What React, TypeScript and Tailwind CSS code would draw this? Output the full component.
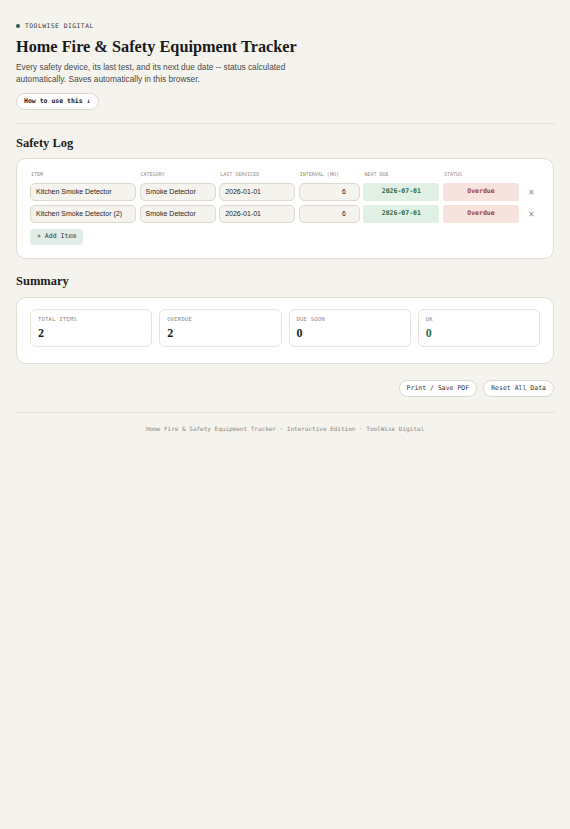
import React from "react";

const mono = "font-['DejaVu_Sans_Mono','Liberation_Mono',monospace]";
const serif = "font-['Liberation_Serif','DejaVu_Serif',serif]";
const sans = "font-['Liberation_Sans',Arial,sans-serif]";

const rows = [
  { item: "Kitchen Smoke Detector", cat: "Smoke Detector", last: "2026-01-01", interval: "6", next: "2026-07-01", status: "Overdue" },
  { item: "Kitchen Smoke Detector (2)", cat: "Smoke Detector", last: "2026-01-01", interval: "6", next: "2026-07-01", status: "Overdue" },
];

const inputCls = `h-[18px] w-full rounded-[5px] border border-[#ddd8cc] bg-[#f5f3ee] px-[5px] text-[7px] text-[#1f1f1f] ${sans} flex items-center`;

function Stat({ label, value, green }: { label: string; value: string; green?: boolean }) {
  return (
    <div className="h-[38px] rounded-[6px] border border-[#e6e2d8] bg-white px-[7px] pt-[7px]">
      <div className={`${mono} text-[5.5px] tracking-[0.04em] text-[#8a877f] leading-none`}>{label}</div>
      <div className={`${serif} mt-[4px] text-[12px] font-bold leading-none ${green ? "text-[#2f6b45]" : "text-[#1c1c1c]"}`}>{value}</div>
    </div>
  );
}

export default function App() {
  return (
    <div className="min-h-[829px] bg-[#f5f3ee] px-4 pt-[23px] text-[#1c1c1c]">
      <div className="flex items-center gap-[5px]">
        <span className="h-[4px] w-[4px] rounded-full bg-[#2f5a3f]" />
        <span className={`${mono} text-[6.3px] tracking-[0.08em] text-[#333] leading-none`}>TOOLWISE DIGITAL</span>
      </div>
      <h1 className={`${serif} mt-[7px] text-[16.3px] font-bold leading-[22px] text-[#1a1a1a]`}>
        Home Fire &amp; Safety Equipment Tracker
      </h1>
      <p className={`${sans} mt-[3px] w-[272px] text-[8.3px] leading-[12px] text-[#4a4a4a]`}>
        Every safety device, its last test, and its next due date -- status calculated automatically. Saves automatically in this browser.
      </p>
      <button className={`${mono} mt-[8px] flex h-[17px] items-center rounded-full border border-[#dcd7cb] bg-white px-[7px] text-[6.5px] font-bold text-[#222]`}>
        How to use this ↓
      </button>
      <div className="mt-[13px] h-px bg-[#e3dfd5]" />

      <h2 className={`${serif} mt-[11px] text-[12.5px] font-bold leading-[16px]`}>Safety Log</h2>
      <div className="mt-[7px] rounded-[10px] border border-[#e2ddd1] bg-white px-[13px] pt-[11px] pb-[13px]">
        <div className="grid grid-cols-[106px_76px_76px_61px_76px_76px_1fr] gap-x-[3.6px] gap-y-[4px]">
          {["ITEM", "CATEGORY", "LAST SERVICED", "INTERVAL (MO)", "NEXT DUE", "STATUS", ""].map((h, i) => (
            <div key={i} className={`${mono} text-[5px] leading-[8px] mb-[1px] text-[#8d8a82] pl-[1px]`}>{h}</div>
          ))}
          {rows.map((r, i) => (
            <React.Fragment key={i}>
              <div className={inputCls}>{r.item}</div>
              <div className={inputCls}>{r.cat}</div>
              <div className={inputCls}>{r.last}</div>
              <div className={`${inputCls} justify-end pr-[13px]`}>{r.interval}</div>
              <div className={`${mono} flex h-[18px] items-center justify-center rounded-[3px] bg-[#e1f0e4] text-[6.5px] font-bold text-[#2f6b45]`}>{r.next}</div>
              <div className={`${mono} flex h-[18px] items-center justify-center rounded-[3px] bg-[#f7e3dd] text-[6.5px] font-bold text-[#a2402c]`}>{r.status}</div>
              <div className="flex h-[18px] items-center justify-center text-[10px] text-[#888]">×</div>
            </React.Fragment>
          ))}
        </div>
        <button className={`${mono} mt-[6px] flex h-[16px] items-center rounded-[4px] bg-[#e2ece6] px-[7px] text-[6.5px] text-[#333]`}>
          + Add Item
        </button>
      </div>

      <h2 className={`${serif} mt-[14px] text-[12.5px] font-bold leading-[16px]`}>Summary</h2>
      <div className="mt-[8px] rounded-[10px] border border-[#e2ddd1] bg-white px-[13px] pt-[11px] pb-[16px]">
        <div className="grid grid-cols-4 gap-[7px]">
          <Stat label="TOTAL ITEMS" value="2" />
          <Stat label="OVERDUE" value="2" />
          <Stat label="DUE SOON" value="0" />
          <Stat label="OK" value="0" green />
        </div>
      </div>

      <div className="mt-[16px] flex justify-end gap-[6px]">
        <button className={`${mono} h-[17px] rounded-full border border-[#dcd7cb] bg-white px-[7px] text-[6.5px] text-[#333]`}>Print / Save PDF</button>
        <button className={`${mono} h-[17px] rounded-full border border-[#dcd7cb] bg-white px-[7px] text-[6.5px] text-[#333]`}>Reset All Data</button>
      </div>
      <div className="mt-[15px] h-px bg-[#e3dfd5]" />
      <div className={`${mono} mt-[11px] text-center text-[6px] text-[#8d8a82]`}>
        Home Fire &amp; Safety Equipment Tracker · Interactive Edition · ToolWise Digital
      </div>
    </div>
  );
}
